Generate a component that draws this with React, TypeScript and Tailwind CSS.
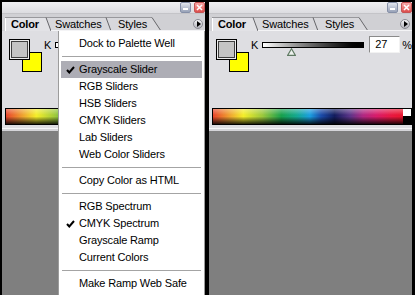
import React from 'react';

type Entry = { label?: string; checked?: boolean; active?: boolean; sep?: boolean };

const menuItems: Entry[] = [
  { label: 'Dock to Palette Well' },
  { sep: true },
  { label: 'Grayscale Slider', checked: true, active: true },
  { label: 'RGB Sliders' },
  { label: 'HSB Sliders' },
  { label: 'CMYK Sliders' },
  { label: 'Lab Sliders' },
  { label: 'Web Color Sliders' },
  { sep: true },
  { label: 'Copy Color as HTML' },
  { sep: true },
  { label: 'RGB Spectrum' },
  { label: 'CMYK Spectrum', checked: true },
  { label: 'Grayscale Ramp' },
  { label: 'Current Colors' },
  { sep: true },
  { label: 'Make Ramp Web Safe' },
];

const Check = () => (
  <svg width="9" height="8" viewBox="0 0 9 8">
    <path d="M1 4 L3.3 6.5 L8 1" fill="none" stroke="#000" strokeWidth="2" />
  </svg>
);

const TitleBar = () => (
  <div className="flex h-[12px] justify-end gap-[3px] border-b border-[#c4c4c8] bg-gradient-to-b from-[#efeff2] to-[#dcdce0]">
    <div className="flex h-[11px] w-[11px] items-end justify-center rounded-[2px] border border-[#8690a8] bg-gradient-to-b from-[#e2e6ee] to-[#98a2b8] pb-[2px]">
      <div className="h-[2px] w-[5px] bg-white" />
    </div>
    <div className="flex h-[11px] w-[11px] items-center justify-center rounded-[2px] border border-[#c45454] bg-gradient-to-b from-[#f6a8a8] to-[#dc4c4c]">
      <svg width="7" height="7" viewBox="0 0 7 7">
        <path d="M1 1L6 6M6 1L1 6" stroke="#fff" strokeWidth="1.6" />
      </svg>
    </div>
  </div>
);

const TabRow = () => (
  <div className="relative flex h-[17px] items-start bg-[#d0d0d4]">
    {/* tab outlines */}
    <svg className="absolute inset-0" width="203" height="17" viewBox="0 0 203 17">
      <path d="M104 3H150L159 17H109Z" fill="#d8d8dc" />
      <path d="M44 3H104L109 17H49Z" fill="#d8d8dc" />
      <path d="M3 17V3H44L49 17Z" fill="#e2e2e6" />
      <path d="M3 3.5H150" stroke="#98989c" />
      <path d="M3.5 17V4" stroke="#ffffff" />
      <path d="M44 3.5L49 17M104 3.5L109 17M150 3.5L159 17" stroke="#66666a" />
      <path d="M49 16.5H203" stroke="#f4f4f6" />
    </svg>
    <div className="relative flex pl-[9px] pt-[4px] leading-[13px]">
      <span className="w-[44px] font-bold">Color</span>
      <span className="w-[63px]">Swatches</span>
      <span>Styles</span>
    </div>
    <div className="relative ml-auto mr-[2px] mt-[5px] flex h-[10px] w-[10px] items-center justify-center rounded-full border border-[#8a8a92] bg-gradient-to-b from-[#f4f4f6] to-[#b4b4bc]">
      <div className="ml-[1px] h-0 w-0 border-y-[3px] border-l-[4px] border-y-transparent border-l-black" />
    </div>
  </div>
);

// covered: the left panel's field sits under the open menu, so its text is left out
const Body = ({ covered }: { covered?: boolean }) => (
  <div className="flex h-[97px] flex-col bg-[#dedee2]">
    <div className="flex items-start pl-[7px] pt-[5px]">
      <div className="relative mt-[3px] h-[33px] w-[33px]">
        <div className="absolute left-[13px] top-[13px] h-[20px] w-[20px] border border-black bg-[#ffff00]" />
        <div className="absolute left-0 top-0 h-[21px] w-[21px] border border-black bg-[#ececec] p-[1px]">
          <div className="h-full w-full border border-[#404040] bg-[#c4c4c4]" />
        </div>
      </div>
      <span className="ml-[2px] mt-[3px] leading-[13px]">K</span>
      <div className="ml-[4px] mt-[6px] flex flex-col">
        <div className="h-[6px] w-[102px] border border-black bg-gradient-to-r from-white to-black" />
        <svg className="ml-[25px]" width="9" height="8" viewBox="0 0 9 8">
          <path d="M4.5 0.8L8.3 7.3H0.7Z" fill="#eef2ee" stroke="#5f7a63" strokeWidth="1.2" />
        </svg>
      </div>
      {!covered && (
        <>
          <div className="ml-[5px] flex h-[17px] w-[31px] items-center border border-b-[#f2f2f2] border-l-[#8a8a8a] border-r-[#f2f2f2] border-t-[#8a8a8a] bg-white pl-[5px] leading-[13px]">
            27
          </div>
          <span className="ml-[2px] mt-[3px] leading-[13px]">%</span>
        </>
      )}
    </div>
    <div className="mb-[3px] ml-[3px] mt-auto flex h-[17px] border border-black">
      <div className="flex-1 bg-[linear-gradient(to_bottom,rgba(255,255,255,0.35),rgba(255,255,255,0)_40%,rgba(0,0,0,0)_50%,rgba(0,0,0,0.85)),linear-gradient(to_right,#e8442c,#f0b030_10%,#f4ee2a_16%,#9cc83c_26%,#18a04c_36%,#14a890_44%,#1a9ee0_51%,#1a4aa8_57%,#121c5c_64%,#5a3488_72%,#b02882_79%,#d81c6a_86%,#e81840_94%,#e8142c)]" />
      <div className="flex w-[8px] flex-col bg-black">
        <div className="h-[7px] bg-white" />
      </div>
    </div>
  </div>
);

const Panel = ({ covered }: { covered?: boolean }) => (
  <div className="flex w-[203px] flex-col">
    <TitleBar />
    <TabRow />
    <Body covered={covered} />
    <div className="h-[1px] bg-[#f6f6f8]" />
    <div className="h-[2px] bg-[#d4d4d8]" />
    <div className="flex-1 bg-[#7f7f7f]" />
  </div>
);

const Menu = () => (
  <div className="absolute left-[58px] top-[31px] h-[270px] w-[147px] border-x border-[#9c9c9c] bg-white pt-[4px]">
    {menuItems.map((item, i) =>
      item.sep ? (
        <div key={i} className="mx-[3px] flex h-[9px] items-center">
          <div className="h-[1px] w-full bg-[#a4a4a4]" />
        </div>
      ) : (
        <div
          key={i}
          className={`mx-[2px] flex h-[17px] items-center ${item.active ? 'bg-[#adadb5]' : ''}`}
        >
          <div className="flex w-[18px] justify-center pl-[1px]">{item.checked && <Check />}</div>
          <span className="leading-[13px]">{item.label}</span>
        </div>
      )
    )}
  </div>
);

export default function App() {
  return (
    <div className="relative flex h-[295px] w-[415px] gap-[4px] overflow-hidden bg-black pl-[2px] pt-[2px] font-['Liberation_Sans',Arial,sans-serif] text-[11px] tracking-[-0.15px] text-black">
      <Panel covered />
      <Panel />
      <Menu />
    </div>
  );
}
